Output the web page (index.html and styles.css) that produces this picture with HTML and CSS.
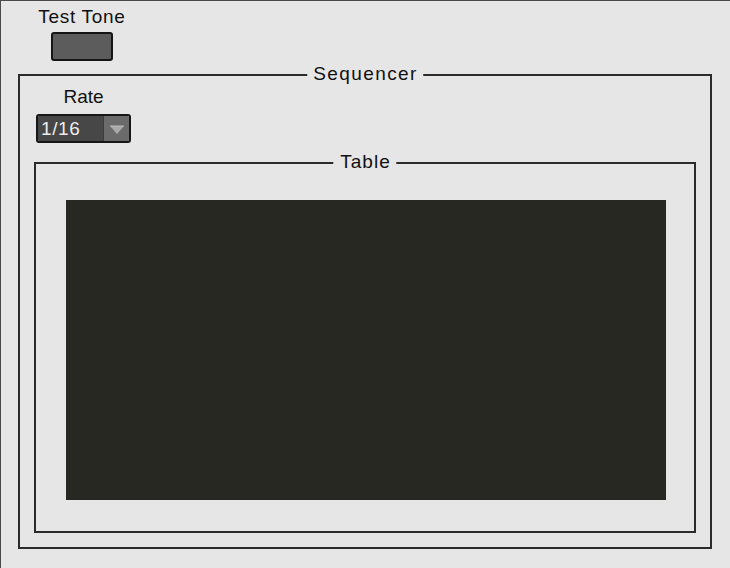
FILE: index.html
```html
<!DOCTYPE html>
<html>
<head>
<meta charset="utf-8">
<link rel="stylesheet" href="styles.css">
</head>
<body>
<div class="window">
  <div class="test-tone">
    <div class="label label-tone">Test Tone</div>
    <button class="tone-button" type="button"></button>
  </div>
  <div class="group sequencer">
    <span class="legend legend-wide">Sequencer</span>
    <div class="rate">
      <div class="label">Rate</div>
      <div class="dropdown">
        <div class="dropdown-value">1/16</div>
        <div class="dropdown-arrow">
          <svg width="16" height="10" viewBox="0 0 16 10"><polygon points="1,1 15,1 8,9" fill="#a9a9a9"/><polyline points="1,1 15,1" stroke="#bdbdbd" stroke-width="1" fill="none"/></svg>
        </div>
      </div>
    </div>
    <div class="group table">
      <span class="legend legend-table">Table</span>
      <div class="table-canvas"></div>
    </div>
  </div>
</div>
</body>
</html>
```

FILE: styles.css
```css
html, body {
  margin: 0;
  padding: 0;
  background: #e6e6e6;
}

.window {
  box-sizing: border-box;
  width: 730px;
  height: 568px;
  border-top: 1px solid #4a4a4a;
  border-left: 1px solid #4a4a4a;
  padding: 5px 0 0 17px;
  font-family: "Liberation Sans", Arial, sans-serif;
  font-size: 19px;
  line-height: 22px;
  color: #111;
}

.label {
  white-space: nowrap;
}

.label-tone {
  letter-spacing: 0.7px;
}

.test-tone {
  display: flex;
  flex-direction: column;
  align-items: center;
  gap: 4px;
  width: 100px;
  margin-left: 14px;
}

.tone-button {
  box-sizing: border-box;
  width: 62px;
  height: 29px;
  padding: 0;
  background: #5c5c5c;
  border: 2px solid #151515;
  border-radius: 3px;
}

.group {
  position: relative;
  box-sizing: border-box;
  border: 2px solid #2b2b2b;
}

.sequencer {
  width: 694px;
  height: 475px;
  margin-top: 13px;
  padding: 10px 14px 14px 14px;
}

.legend {
  position: absolute;
  top: -13px;
  left: 50%;
  transform: translateX(-50%);
  padding: 0 6px;
  background: #e6e6e6;
  white-space: nowrap;
}

.legend-wide {
  letter-spacing: 1.4px;
  padding: 0 5px 0 6px;
}

.legend-table {
  letter-spacing: 1px;
  padding: 0 6px 0 7px;
}

.rate {
  display: flex;
  flex-direction: column;
  align-items: center;
  gap: 6px;
  width: 95px;
  margin-left: 2px;
}

.dropdown {
  box-sizing: border-box;
  display: flex;
  width: 95px;
  height: 29px;
  border: 2px solid #171717;
  border-radius: 3px;
  overflow: hidden;
}

.dropdown-value {
  flex: 1;
  background: #474747;
  color: #ececec;
  padding-left: 3px;
  line-height: 25px;
  letter-spacing: 0.6px;
}

.dropdown-arrow {
  width: 26px;
  background: #6b6b6b;
  border-left: 1px solid #3c3c3c;
  display: flex;
  align-items: center;
  justify-content: center;
  padding-top: 2px;
  box-sizing: border-box;
}

.table {
  width: 662px;
  height: 371px;
  margin-top: 19px;
  padding: 36px 0 0 30px;
}

.table-canvas {
  width: 600px;
  height: 300px;
  background: #282822;
}
```
